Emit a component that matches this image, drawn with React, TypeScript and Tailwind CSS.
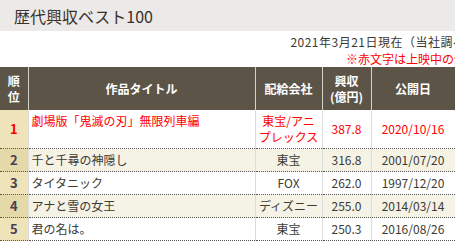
const rows = [
  { rank: 1, title: '劇場版「鬼滅の刃」無限列車編', company: ['東宝/アニ', 'プレックス'], gross: '387.8', date: '2020/10/16', now: true },
  { rank: 2, title: '千と千尋の神隠し', company: ['東宝'], gross: '316.8', date: '2001/07/20' },
  { rank: 3, title: 'タイタニック', company: ['FOX'], gross: '262.0', date: '1997/12/20' },
  { rank: 4, title: 'アナと雪の女王', company: ['ディズニー'], gross: '255.0', date: '2014/03/14' },
  { rank: 5, title: '君の名は。', company: ['東宝'], gross: '250.3', date: '2016/08/26' },
];

export default function App() {
  return (
    <div
      className="w-[455px] h-[241px] overflow-hidden bg-white text-[#3c3a33]"
      style={{ fontFamily: '"Noto Sans CJK JP", "Noto Sans", sans-serif' }}
    >
      <div className="w-[480px] h-[31px] bg-[#ebeae8] pl-[14px] flex items-center">
        <h1 className="text-[16px] leading-none text-[#3b3128]">歴代興収ベスト100</h1>
      </div>

      <div className="w-[478px] pt-[2px] text-right text-[12px] leading-[17px] whitespace-nowrap">
        <p className="tracking-[0.5px]">2021年3月21日現在（当社調べ）</p>
        <p className="text-[#ff0000]">※赤文字は上映中の作品</p>
      </div>

      <table className="w-[455px] table-fixed border-collapse text-[12px] leading-[16px]">
        <colgroup>
          <col className="w-[28px]" />
          <col className="w-[227px]" />
          <col className="w-[67px]" />
          <col className="w-[49px]" />
          <col className="w-[84px]" />
        </colgroup>
        <thead>
          <tr className="h-[43px] bg-[#5d5448] text-white font-bold">
            <th className="border-r border-[#d6d1c8] leading-[16px]">順<br />位</th>
            <th className="border-r border-[#d6d1c8]">作品タイトル</th>
            <th className="border-r border-[#d6d1c8]">配給会社</th>
            <th className="border-r border-[#d6d1c8] leading-[16px]">興収<br />(億円)</th>
            <th className="border-r border-[#d6d1c8]">公開日</th>
          </tr>
        </thead>
        <tbody>
          {rows.map((r) => {
            const even = r.rank % 2 === 0;
            const red = r.now ? 'text-[#ff0000]' : '';
            return (
              <tr
                key={r.rank}
                className={`border-b border-dotted border-[#555] ${even ? 'bg-[#f5f2e6]' : 'bg-white'}`}
              >
                <td
                  className={`py-[3px] text-center text-[13px] font-bold border-r border-[#dcdcdc] ${
                    even ? 'bg-[#e6d9a9]' : 'bg-[#eee3b9]'
                  } ${r.now ? 'text-[#ff0000]' : 'text-[#453f52]'}`}
                >
                  {r.rank}
                </td>
                <td className={`py-[3px] px-[3px] align-top border-r border-[#dcdcdc] ${red}`}>{r.title}</td>
                <td className={`py-[3px] text-center border-r border-[#dcdcdc] ${red}`}>
                  {r.company.map((c) => (
                    <div key={c}>{c}</div>
                  ))}
                </td>
                <td className={`py-[3px] text-center border-r border-[#dcdcdc] ${red}`}>{r.gross}</td>
                <td className={`py-[3px] text-center border-r border-[#dcdcdc] ${red}`}>{r.date}</td>
              </tr>
            );
          })}
        </tbody>
      </table>
    </div>
  );
}
